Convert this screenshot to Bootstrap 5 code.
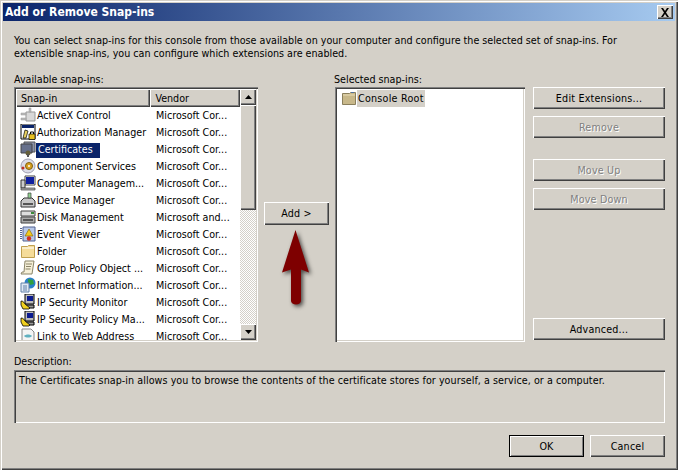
<!DOCTYPE html>
<html lang="en"><head><meta charset="utf-8"><title>Add or Remove Snap-ins</title>
<link href="https://cdn.jsdelivr.net/npm/bootstrap@5.3.0/dist/css/bootstrap.min.css" rel="stylesheet">
<style>
html,body{margin:0;height:470px;overflow:hidden;background:#d4d0c8}
body{font-family:"DejaVu Sans Condensed","DejaVu Sans",sans-serif;font-size:10.65px;line-height:13px;color:#000}
.win-frame{width:678px;height:470px;padding:3px;background:#d4d0c8;box-shadow:inset 1px 1px 0 #d4d0c8,inset 2px 2px 0 #fff,inset -1px -1px 0 #404040,inset -2px -2px 0 #808080}
.title-bar{height:18px;padding:1px 2px 0 2px;background:linear-gradient(90deg,#0a246a,#a6caf0);color:#fff;font-weight:700;font-size:12px}
.win-x{width:16px;height:14px;padding:0;margin-top:-1px;background:#d4d0c8;box-shadow:inset 1px 1px 0 #fff,inset -1px -1px 0 #404040,inset -2px -2px 0 #808080;border:0}
.win-body{padding:13px 10px 0 11px}
.intro{height:39px}
.lbl{height:14px}
.main-grid{display:grid;grid-template-columns:244px 65px 190px 134px;column-gap:6px;height:255px}
.main-grid>:last-child{margin-left:2px}
.sunken{box-shadow:inset 1px 1px 0 #808080,inset 2px 2px 0 #404040,inset -1px -1px 0 #fff,inset -2px -2px 0 #d4d0c8;padding:2px}
.white-box{background:#fff;overflow:hidden}
.list-wrap{height:251px;overflow:hidden}
.list-main{width:225px;overflow:hidden}
.head-row{height:18px}
.head-cell{height:18px;line-height:19px;padding-left:5px;box-shadow:inset 1px 1px 0 #fff,inset -1px -1px 0 #404040,inset -2px -2px 0 #808080;background:#d4d0c8}
.c1{width:135px}.c2{width:90px}
.snap-row{height:17px;line-height:17px;white-space:nowrap}
.name-cell{width:135px;padding-left:4px}
.ico{width:16px;height:16px;flex:none;margin-right:1px}
.vendor-cell{padding-left:5px}
.sel-name{height:15px;line-height:13px;margin:2px 0 0 -1px;padding:0 7px 0 2px;background:#0a246a;color:#fff}
.root-row{padding:1px 0 0 5px}
.root-ico{width:14px;height:14px;flex:none;margin:2px 1px 0 0}
.root-name{height:17px;padding:0 1px;letter-spacing:.25px;background:#d4d0c8}
.sbar{width:16px}
.sb-btn{height:16px;flex:none;background:#d4d0c8;box-shadow:inset 1px 1px 0 #fff,inset -1px -1px 0 #404040,inset -2px -2px 0 #808080}
.sb-thumb{height:105px;flex:none;background:#d4d0c8;box-shadow:inset 1px 1px 0 #fff,inset -1px -1px 0 #404040,inset -2px -2px 0 #808080}
.sb-track{flex:1 1 auto;background:repeating-conic-gradient(#fff 0 25%,#d4d0c8 0 50%) 0 0/2px 2px}
.btn.classic{--bs-btn-padding-x:0;--bs-btn-padding-y:0;--bs-btn-font-size:10.65px;--bs-btn-line-height:20px;--bs-btn-color:#000;--bs-btn-bg:#d4d0c8;--bs-btn-border-width:0;--bs-btn-border-radius:0;--bs-btn-hover-bg:#d4d0c8;--bs-btn-hover-color:#000;--bs-btn-disabled-bg:#d4d0c8;--bs-btn-disabled-color:#808080;--bs-btn-disabled-opacity:1;display:block;height:22px;width:100%;padding-top:2px;letter-spacing:.2px;font-family:inherit;box-shadow:inset 1px 1px 0 #fff,inset -1px -1px 0 #404040,inset -2px -2px 0 #808080}
.btn.classic:disabled{text-shadow:1px 1px 0 #fff}
.btn.classic.add-btn{margin-top:115px;height:23px;padding-top:0}
.arrow-svg{display:block;margin-top:3px;filter:drop-shadow(2px 2px 2px rgba(0,0,0,.65));overflow:visible}
.gap7{margin-top:7px}.gap21{margin-top:21px}.bottom-btn{margin-top:108px}
.desc-lbl{margin-top:13px;height:15px}
.desc-box{height:53px;padding:4px 5px;letter-spacing:.06px}
.foot{margin-top:12px;gap:6px}
.foot .btn.classic{width:75px}
.btn.classic.default-btn{box-shadow:inset 0 0 0 1px #000,inset 2px 2px 0 #fff,inset -2px -2px 0 #808080}
</style></head><body>
<div class="win-frame">
 <div class="title-bar d-flex align-items-center justify-content-between">
  <span>Add or Remove Snap-ins</span>
  <button class="win-x d-flex align-items-center justify-content-center" aria-label="Close"><svg width="10" height="9" viewBox="0 0 10 9"><path d="M1 0h2l2 3 2-3h2L6 4.500 9 9H7L5 6 3 9H1l3-4.500z" fill="#000"/></svg></button>
 </div>
 <div class="win-body">
  <div class="intro">You can select snap-ins for this console from those available on your computer and configure the selected set of snap-ins. For<br>extensible snap-ins, you can configure which extensions are enabled.</div>
  <div class="d-flex lbl"><div style="width:320px">Available snap-ins:</div><div>Selected snap-ins:</div></div>
  <div class="main-grid">
   <div class="sunken white-box">
    <div class="list-wrap d-flex">
     <div class="list-main">
      <div class="head-row d-flex"><div class="head-cell c1">Snap-in</div><div class="head-cell c2">Vendor</div></div>
      <div class="snap-row d-flex"><div class="name-cell d-flex"><svg class="ico" viewBox="0 0 16 16"><path d="M6 5h9v9H6z" fill="#d8d8d8" stroke="#999"/><path d="M9 1h2v4H9zM1 6h5v2H1zM1 11h5v2H1z" fill="#bbb" stroke="#999" stroke-width=".5"/></svg><span>ActiveX Control</span></div><div class="vendor-cell">Microsoft Cor...</div></div>
      <div class="snap-row d-flex"><div class="name-cell d-flex"><svg class="ico" viewBox="0 0 16 16"><path d="M1 0h14v15H1z" fill="#fff" stroke="#000"/><path d="M2 1h12v3H2z" fill="#0a246a"/><path d="M3 14l2-8 3 1-2 7z" fill="#e8d060" stroke="#000" stroke-width=".7"/><path d="M9 10h6v5.500H9z" fill="#e8c020" stroke="#000" stroke-width=".7"/><path d="M10.500 10V8h3v2" fill="none" stroke="#000"/></svg><span>Authorization Manager</span></div><div class="vendor-cell">Microsoft Cor...</div></div>
      <div class="snap-row d-flex"><div class="name-cell d-flex"><svg class="ico" viewBox="0 0 16 16"><path d="M4 1h11v10H4z" fill="#8a92a8" stroke="#555"/><path d="M1 3h11v9H1z" fill="#66708c" stroke="#444"/><circle cx="8" cy="12" r="2.500" fill="#66603a"/><path d="M7 13h2v3H7z" fill="#555"/></svg><span class="sel-name">Certificates</span></div><div class="vendor-cell">Microsoft Cor...</div></div>
      <div class="snap-row d-flex"><div class="name-cell d-flex"><svg class="ico" viewBox="0 0 16 16"><circle cx="8" cy="8" r="7" fill="#dcdce8" stroke="#a0a0b0"/><circle cx="9" cy="8" r="3.500" fill="#d8a020" stroke="#806010"/><circle cx="9" cy="8" r="1" fill="#fff"/><circle cx="3" cy="10" r="1.500" fill="#c03020"/></svg><span>Component Services</span></div><div class="vendor-cell">Microsoft Cor...</div></div>
      <div class="snap-row d-flex"><div class="name-cell d-flex"><svg class="ico" viewBox="0 0 16 16"><path d="M5 1h10v9H5z" fill="#fff" stroke="#444"/><path d="M6 2h8v7H6z" fill="#1020a0"/><path d="M1 5h4v8H1z" fill="#ccc" stroke="#333"/><path d="M1 13h14v2H1z" fill="#aaa" stroke="#444" stroke-width=".7"/></svg><span>Computer Managem...</span></div><div class="vendor-cell">Microsoft Cor...</div></div>
      <div class="snap-row d-flex"><div class="name-cell d-flex"><svg class="ico" viewBox="0 0 16 16"><path d="M1 9l3-3h8l3 3v6H1z" fill="#c8c8c8" stroke="#333"/><path d="M3 11h10v2H3z" fill="#555"/><path d="M8 1h3v5H8z" fill="#90d090" stroke="#444" stroke-width=".7"/></svg><span>Device Manager</span></div><div class="vendor-cell">Microsoft Cor...</div></div>
      <div class="snap-row d-flex"><div class="name-cell d-flex"><svg class="ico" viewBox="0 0 16 16"><path d="M1 2h14v5H1z" fill="#ddd" stroke="#444"/><path d="M1 8h14v6H1z" fill="#aaa" stroke="#444"/><path d="M3 10h10v2H3z" fill="#555"/><path d="M11 3h3v2h-3z" fill="#3a8a3a"/></svg><span>Disk Management</span></div><div class="vendor-cell">Microsoft and...</div></div>
      <div class="snap-row d-flex"><div class="name-cell d-flex"><svg class="ico" viewBox="0 0 16 16"><path d="M3 1h12v14H3z" fill="#b8c8e8" stroke="#506090"/><path d="M9 3l4 7H5z" fill="#f0c820" stroke="#806000" stroke-width=".6"/><circle cx="9" cy="12.500" r="2.200" fill="#d03020"/><path d="M1 2v12" stroke="#506090" stroke-width="2" stroke-dasharray="1 1"/></svg><span>Event Viewer</span></div><div class="vendor-cell">Microsoft Cor...</div></div>
      <div class="snap-row d-flex"><div class="name-cell d-flex"><svg class="ico" viewBox="0 0 16 16"><path d="M1.500 3.500h6l1-1h6v12h-13z" fill="#f5dc9a" stroke="#c0a050"/><path d="M2 5h12" stroke="#fff"/></svg><span>Folder</span></div><div class="vendor-cell">Microsoft Cor...</div></div>
      <div class="snap-row d-flex"><div class="name-cell d-flex"><svg class="ico" viewBox="0 0 16 16"><path d="M5 1h9l-2 13H1l1-2h2z" fill="#f6f0d8" stroke="#8a8468"/><path d="M6 4h6M6 6.500h5M5.500 9h5" stroke="#8a8468"/></svg><span>Group Policy Object ...</span></div><div class="vendor-cell">Microsoft Cor...</div></div>
      <div class="snap-row d-flex"><div class="name-cell d-flex"><svg class="ico" viewBox="0 0 16 16"><circle cx="10" cy="6" r="5.500" fill="#2a80c8"/><path d="M8 2l5 1 1 4-4 1-2-3z" fill="#30a040"/><path d="M1 6h8v9H1z" fill="#dfe8f4" stroke="#6080a8"/><path d="M3 9h4M3 11h4M3 13h4" stroke="#6080a8"/></svg><span>Internet Information...</span></div><div class="vendor-cell">Microsoft Cor...</div></div>
      <div class="snap-row d-flex"><div class="name-cell d-flex"><svg class="ico" viewBox="0 0 16 16"><path d="M5 0h9v10H5z" fill="#bbb" stroke="#000"/><path d="M7 2h6v5H7z" fill="#0a1a90"/><path d="M6 11h8v3H6z" fill="#999" stroke="#000"/><path d="M1 7c3 0 3 2 4 3l5 4-1 1H3L1 11z" fill="#f0d020" stroke="#000" stroke-width=".8"/></svg><span>IP Security Monitor</span></div><div class="vendor-cell">Microsoft Cor...</div></div>
      <div class="snap-row d-flex"><div class="name-cell d-flex"><svg class="ico" viewBox="0 0 16 16"><path d="M5 0h9v10H5z" fill="#bbb" stroke="#000"/><path d="M7 2h6v5H7z" fill="#0a1a90"/><path d="M6 11h8v3H6z" fill="#999" stroke="#000"/><path d="M1 7c3 0 3 2 4 3l5 4-1 1H3L1 11z" fill="#f0d020" stroke="#000" stroke-width=".8"/></svg><span>IP Security Policy Ma...</span></div><div class="vendor-cell">Microsoft Cor...</div></div>
      <div class="snap-row d-flex"><div class="name-cell d-flex"><svg class="ico" viewBox="0 0 16 16"><path d="M2 1h9l3 3v11H2z" fill="#f4f4f4" stroke="#888"/><path d="M4 8c2-2 6-2 8 0-2 2-6 2-8 0z" fill="#60b0c0"/></svg><span>Link to Web Address</span></div><div class="vendor-cell">Microsoft Cor...</div></div>
     </div>
     <div class="sbar d-flex flex-column">
      <div class="sb-btn d-flex align-items-center justify-content-center"><svg width="7" height="4" viewBox="0 0 7 4"><path d="M3.500 0L7 4H0z" fill="#000"/></svg></div>
      <div class="sb-thumb"></div><div class="sb-track"></div>
      <div class="sb-btn d-flex align-items-center justify-content-center"><svg width="7" height="4" viewBox="0 0 7 4"><path d="M0 0h7L3.500 4z" fill="#000"/></svg></div>
     </div>
    </div>
   </div>
   <div>
    <button class="btn classic add-btn">Add &gt;</button>
    <svg class="arrow-svg" width="65" height="78" viewBox="264 228 65 78"><path d="M295.500 230L309 272.500 301 269.500V301a5 3.500 0 0 1-10 0V269.500L282 272.500z" fill="#7e0000"/></svg>
   </div>
   <div class="sunken white-box">
    <div class="snap-row d-flex root-row"><svg class="root-ico" viewBox="0 0 14 14"><path d="M.500 1.500h7l1-1h5v12h-13z" fill="#c8b88a" stroke="#8a7f5c"/><path d="M1 3h12" stroke="#e8dcb8"/><path d="M9 0h3v1H9z" fill="#5070a0"/></svg><span class="root-name">Console Root</span></div>
   </div>
   <div>
    <button class="btn classic">Edit Extensions...</button>
    <button class="btn classic gap7" disabled>Remove</button>
    <button class="btn classic gap21" disabled>Move Up</button>
    <button class="btn classic gap7" disabled>Move Down</button>
    <button class="btn classic bottom-btn">Advanced...</button>
   </div>
  </div>
  <div class="desc-lbl">Description:</div>
  <div class="sunken desc-box">The Certificates snap-in allows you to browse the contents of the certificate stores for yourself, a service, or a computer.</div>
  <div class="foot d-flex justify-content-end"><button class="btn classic default-btn">OK</button><button class="btn classic">Cancel</button></div>
 </div>
</div>
<script src="https://cdn.jsdelivr.net/npm/bootstrap@5.3.0/dist/js/bootstrap.bundle.min.js"></script>
</body></html>
